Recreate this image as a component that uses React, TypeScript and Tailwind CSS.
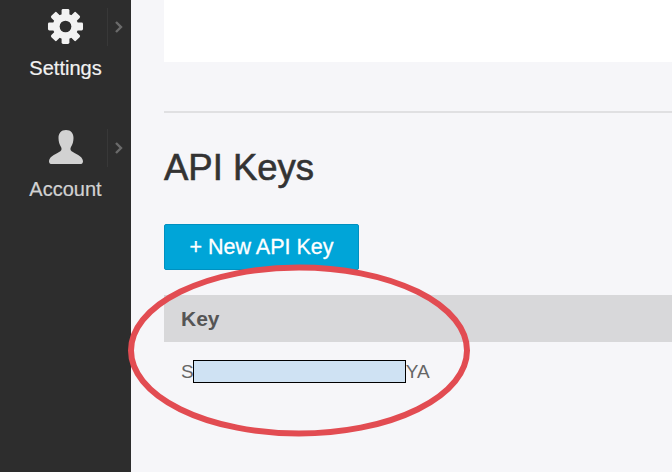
import React from 'react';

const GearIcon = () => (
  <svg width="37" height="37" viewBox="0 0 38 38" fill="#f2f2f2">
    <circle cx="19" cy="19" r="13" />
    {[0, 45, 90, 135, 180, 225, 270, 315].map((deg) => (
      <rect key={deg} x="15" y="1" width="8" height="10" rx="1.5" transform={`rotate(${deg} 19 19)`} />
    ))}
    <circle cx="19" cy="19" r="6" fill="#2d2d2d" />
  </svg>
);

const PersonIcon = () => (
  <svg className="mt-[1px]" width="36" height="34" viewBox="0 0 36 34" fill="#d2d2d2">
    <path d="M18 0c-5 0-7.500 3.500-7.500 8 0 3.500 1 6.500 2.500 9 .8 1.400.8 3-.6 4.200C9.500 23.500 1.500 25.500 1 31c0 1.500.5 3 2 3h30c1.500 0 2-1.500 2-3-.5-5.500-8.500-7.500-11.400-9.800-1.400-1.200-1.400-2.800-.6-4.200 1.500-2.500 2.500-5.500 2.500-9 0-4.500-2.500-8-7.500-8z" />
  </svg>
);

const Chevron = () => (
  <svg width="8" height="12" viewBox="0 0 8 12" fill="none" stroke="#6a6a6a" strokeWidth="2.4">
    <path d="M1 1l5 5-5 5" />
  </svg>
);

const NavItem = ({ icon, label, labelColor }: { icon: React.ReactNode; label: string; labelColor: string }) => (
  <div className="relative h-[121px] flex flex-col items-center">
    <div className="h-[37px] flex items-start justify-center">{icon}</div>
    <span className={`mt-[12px] text-[20px] leading-[22px] [-webkit-text-stroke:0.2px] ${labelColor}`}>{label}</span>
    <div className="absolute left-[107px] top-0 h-[38px] w-px bg-[#383838]" />
    <div className="absolute left-[115px] top-[13px]">
      <Chevron />
    </div>
  </div>
);

const App = () => {
  return (
    <div className="relative flex h-[472px] w-[672px] overflow-hidden bg-[#f6f6f9] font-['Liberation_Sans',Arial,sans-serif]">
      <aside className="w-[131px] shrink-0 bg-[#2d2d2d] pt-[8px]">
        <NavItem icon={<GearIcon />} label="Settings" labelColor="text-[#f2f2f2]" />
        <NavItem icon={<PersonIcon />} label="Account" labelColor="text-[#d2d2d2]" />
      </aside>

      <main className="flex-1 pl-[33px]">
        <div className="h-[62px] bg-white" />
        <div className="mt-[49px] h-[2px] bg-[#e0e0e2]" />
        <h1 className="mt-[35px] text-[36.5px] leading-[40px] text-[#333333] [-webkit-text-stroke:0.6px]">API Keys</h1>
        <button className="mt-[36px] block h-[46px] w-[195px] rounded-[2px] border border-[#0090c0] bg-[#00a5d8] text-[21.500px] text-white [-webkit-text-stroke:0.3px]">
          + New API Key
        </button>
        <div className="mt-[25px] flex h-[47px] items-center bg-[#d8d8da] pl-[17px] text-[21px] font-bold text-[#555555]">
          Key
        </div>
        <div className="mt-[18px] flex h-[23px] items-center pl-[17px] text-[19px] text-[#666666]">
          <span className="mt-[2px]">S</span>
          <span className="-ml-px h-[23px] w-[213px] border border-black bg-[#cfe2f3]" />
          <span className="mt-[2px]">YA</span>
        </div>
      </main>

      <svg className="absolute left-[125px] top-[262px]" width="348" height="177" viewBox="0 0 348 177" fill="none">
        <ellipse cx="174" cy="88.500" rx="168" ry="83" stroke="#e24c52" strokeWidth="6" />
      </svg>
    </div>
  );
};

export default App;
